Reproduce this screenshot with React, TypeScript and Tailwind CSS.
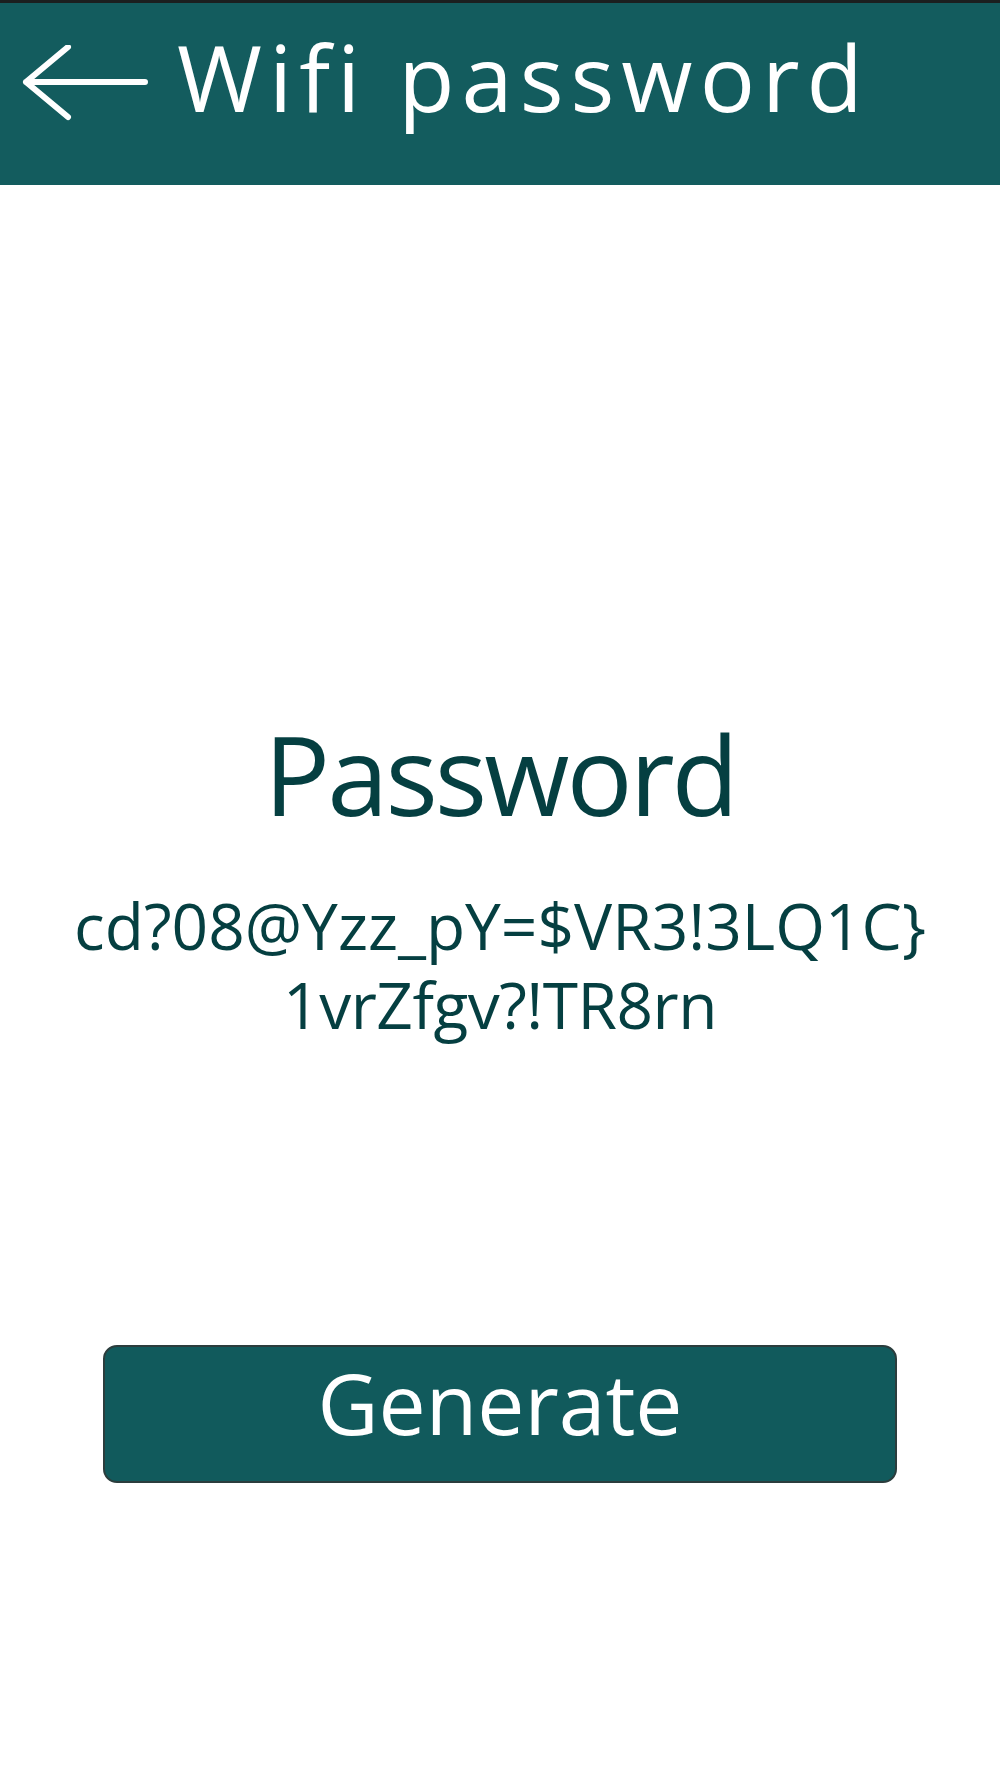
import { useState } from "react";

const font = { fontFamily: '"Open Sans", "Noto Sans", sans-serif' };

function BackArrow() {
  return (
    <svg width="130" height="80" viewBox="0 0 130 80" fill="none">
      <path
        d="M126 37H7M49 2L7 37L49 72"
        stroke="white"
        strokeWidth="6"
        strokeLinecap="round"
        strokeLinejoin="round"
      />
    </svg>
  );
}

export default function App() {
  const [pwd] = useState(["cd?08@Yzz_pY=$VR3!3LQ1C}", "1vrZfgv?!TR8rn"]);

  return (
    <div className="w-[1000px] h-[1778px] bg-white flex flex-col" style={font}>
      <header className="h-[185px] bg-[#135c5e] border-t-[3px] border-[#1b1f1f] flex items-start pl-[19px] pt-[28px]">
        <div className="mt-[14px]">
          <BackArrow />
        </div>
        <h1 className="ml-[28px] text-[92px] leading-none tracking-[7px] text-white">Wifi password</h1>
      </header>

      <main className="flex flex-col items-center">
        <h2 className="mt-[533px] text-[110px] leading-none tracking-[-3px] text-[#053f41]">Password</h2>
        <div className="mt-[58px] text-[64px] leading-[79px] text-[#053f41] text-center">
          <div>{pwd[0]}</div>
          <div className="tracking-[-0.5px]">{pwd[1]}</div>
        </div>
        <button className="mt-[301px] w-[794px] h-[138px] rounded-[14px] bg-[#115a5c] border-2 border-[#2b3d3d] flex items-center justify-center pb-[22px]">
          <span className="text-[84px] leading-none text-white">Generate</span>
        </button>
      </main>
    </div>
  );
}
